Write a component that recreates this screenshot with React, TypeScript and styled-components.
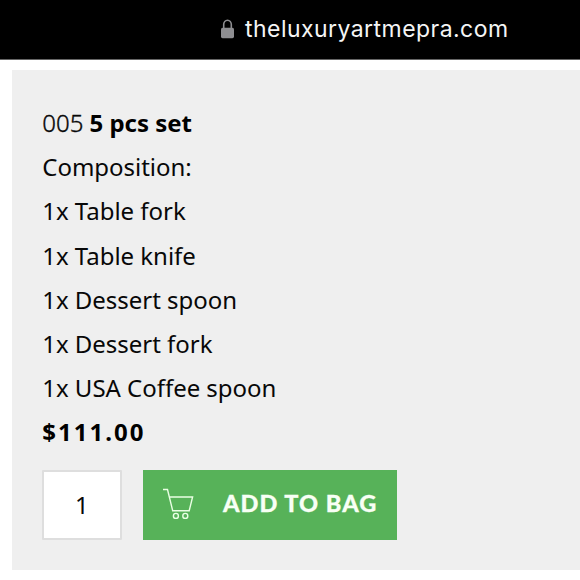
import React from 'react';
import styled, { createGlobalStyle } from 'styled-components';

const GlobalStyle = createGlobalStyle`
  * { box-sizing: border-box; }
  body { margin: 0; background: #fff; overflow: hidden; }
`;

const Page = styled.div`
  width: 580px;
  height: 580px;
  overflow: hidden;
  background: #fff;
  color: #080808;
  font-family: 'Noto Sans', sans-serif;
`;

const AddressBar = styled.header`
  height: 60px;
  display: flex;
  align-items: flex-start;
  padding: 14px 0 0 220px;
  background: #000;
  border-bottom: 1px solid #666;
`;

const LockIcon = styled.svg`
  flex: none;
  width: 15px;
  height: 20px;
  margin-top: 5px;
`;

const Domain = styled.span`
  margin-left: 10px;
  color: #f5f5f5;
  font: 400 23px/30px Inter, sans-serif;
  letter-spacing: 0.45px;
  white-space: nowrap;
`;

const Card = styled.main`
  height: 500px;
  margin: 10px 0 0 12px;
  padding: 31.3px 30px 0 30.3px;
  background: #efefef;
`;

const Line = styled.p`
  margin: 0;
  font-size: 24px;
  line-height: 44.1px;
  letter-spacing: -0.03px;
  white-space: nowrap;
`;

const Code = styled.span`
  font-weight: 300;
  -webkit-text-stroke: 0.35px #080808;
`;

const SetName = styled.strong`
  font-weight: 700;
  color: #000;
`;

const Price = styled(Line)`
  font-weight: 700;
  letter-spacing: 2px;
  color: #000;
`;

const Actions = styled.div`
  display: flex;
  gap: 20.3px;
  margin-top: 15.5px;
`;

const Quantity = styled.input`
  width: 80px;
  height: 70px;
  padding: 0 1px 1px 0;
  border: 2px solid #dedede;
  border-radius: 1px;
  background: #fff;
  color: #080808;
  font: 400 24px 'Noto Sans', sans-serif;
  text-align: center;
  outline: none;
`;

const AddButton = styled.button`
  display: flex;
  align-items: center;
  width: 254.2px;
  height: 70px;
  padding: 0 0 3px 20px;
  border: 0;
  background: #57b259;
  color: #f8fff5;
  font: 900 23.5px/30px Lato, sans-serif;
  letter-spacing: 1.05px;
  white-space: nowrap;
  -webkit-text-stroke: 0.3px #f8fff5;
`;

const CartIcon = styled.svg`
  flex: none;
  width: 32px;
  height: 34px;
  margin-right: 28.4px;
`;

const items = [
  'Composition:',
  '1x Table fork',
  '1x Table knife',
  '1x Dessert spoon',
  '1x Dessert fork',
  '1x USA Coffee spoon',
];

export default function App() {
  return (
    <Page>
      <GlobalStyle />
      <AddressBar>
        <LockIcon viewBox="0 0 15 20">
          <path d="M3.7 10V5.6a3.8 4.3 0 0 1 7.6 0V10" fill="none" stroke="#8e8e91" strokeWidth="1.6" />
          <rect x="1" y="8.7" width="13" height="10.5" rx="1.6" fill="#8e8e91" />
        </LockIcon>
        <Domain>theluxuryartmepra.com</Domain>
      </AddressBar>
      <Card>
        <Line>
          <Code>005</Code> <SetName>5 pcs set</SetName>
        </Line>
        {items.map((item) => (
          <Line key={item}>{item}</Line>
        ))}
        <Price>$111.00</Price>
        <Actions>
          <Quantity defaultValue="1" aria-label="Quantity" />
          <AddButton>
            <CartIcon viewBox="0 0 32 34" fill="none" stroke="#eaffe4" strokeWidth="1.4">
              <path d="M0 3.5H4.5l5.2 21.2h16.5L29.6 11H6.5" />
              <circle cx="12.9" cy="29.9" r="2.5" />
              <circle cx="22.3" cy="29.9" r="2.5" />
            </CartIcon>
            ADD TO BAG
          </AddButton>
        </Actions>
      </Card>
    </Page>
  );
}
